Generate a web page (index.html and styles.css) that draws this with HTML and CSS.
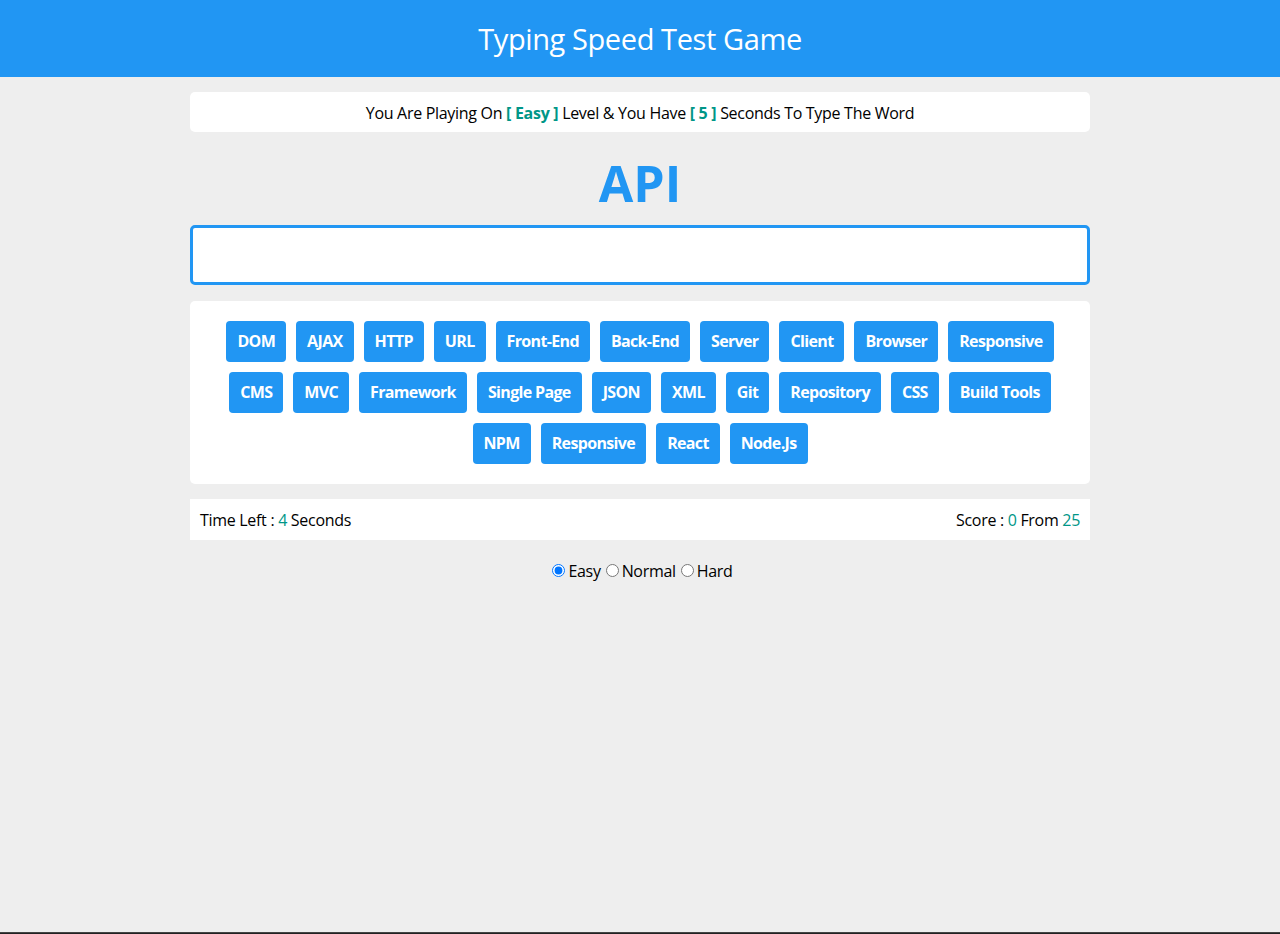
FILE: index.html
```html
<!DOCTYPE html>
<html lang="en">
<head>
<meta charset="UTF-8">
<title>Typing Speed Test Game</title>
<link rel="stylesheet" href="styles.css">
</head>
<body>
<div class="page">
  <h1 class="header">Typing Speed Test Game</h1>
  <main class="game">
    <div class="message">You Are Playing On <span class="lvl">[ Easy ]</span> Level &amp; You Have <span class="lvl">[ 5 ]</span> Seconds To Type The Word</div>
    <div class="the-word">API</div>
    <input class="input" type="text" aria-label="type here">
    <div class="upcoming-words">
      <div>DOM</div><div>AJAX</div><div>HTTP</div><div>URL</div><div>Front-End</div><div>Back-End</div><div>Server</div><div>Client</div><div>Browser</div><div>Responsive</div>
      <div>CMS</div><div>MVC</div><div>Framework</div><div>Single Page</div><div>JSON</div><div>XML</div><div>Git</div><div>Repository</div><div>CSS</div><div>Build Tools</div>
      <div>NPM</div><div>Responsive</div><div>React</div><div>Node.Js</div>
    </div>
    <div class="control">
      <div class="time">Time Left : <span class="num">4</span> Seconds</div>
      <div class="score">Score : <span class="num">0</span> From <span class="num">25</span></div>
    </div>
    <div class="levels"><input type="radio" name="lvl" id="easy" checked><label for="easy">Easy</label><input type="radio" name="lvl" id="normal"><label for="normal">Normal</label><input type="radio" name="lvl" id="hard"><label for="hard">Hard</label></div>
  </main>
  <footer class="footer"></footer>
</div>
</body>
</html>
```
FILE: styles.css
```css
* { box-sizing: border-box; }
html, body { margin: 0; padding: 0; }
body {
  background: #eeeeee;
  font-family: "Open Sans", "Noto Sans", sans-serif;
  font-size: 16px;
  letter-spacing: -0.3px;
  color: #000;
}
.page {
  min-height: 100vh;
  display: flex;
  flex-direction: column;
}
.header {
  margin: 0;
  height: 77px;
  background: #2196f3;
  color: #fff;
  font-weight: normal;
  font-size: 29px;
  letter-spacing: -0.4px;
  display: flex;
  align-items: center;
  justify-content: center;
}
.game {
  width: 900px;
  margin: 15px auto 0;
}
.message {
  background: #fff;
  height: 40px;
  border-radius: 5px;
  display: flex;
  align-items: center;
  justify-content: center;
  white-space: pre;
  padding-top: 2px;
}
.lvl {
  color: #009688;
  font-weight: bold;
}
.the-word {
  text-align: center;
  color: #2196f3;
  font-weight: bold;
  font-size: 50px;
  letter-spacing: 0;
  line-height: 1;
  margin: 26px 0 17px;
}
.input {
  display: block;
  width: 100%;
  height: 60px;
  border: 3px solid #2196f3;
  border-radius: 5px;
  background: #fff;
  outline: none;
  font-size: 20px;
  font-family: inherit;
}
.upcoming-words {
  margin-top: 16px;
  background: #fff;
  border-radius: 5px;
  padding: 20px;
  display: flex;
  flex-wrap: wrap;
  justify-content: center;
  gap: 10px;
}
.upcoming-words div {
  background: #2196f3;
  color: #fff;
  font-weight: bold;
  letter-spacing: -0.65px;
  padding: 10px 11px;
  border-radius: 4px;
  line-height: 21px;
}
.control {
  margin-top: 15px;
  background: #fff;
  height: 41px;
  padding: 0 10px;
  display: flex;
  align-items: center;
  justify-content: space-between;
}
.num { color: #009688; }
.levels {
  margin-top: 20px;
  text-align: center;
}
.levels input { margin: 3px 3px 0 5px; }
.footer {
  margin-top: auto;
  height: 2px;
  border-top: 1px solid #444;
  background: #222;
}
```
